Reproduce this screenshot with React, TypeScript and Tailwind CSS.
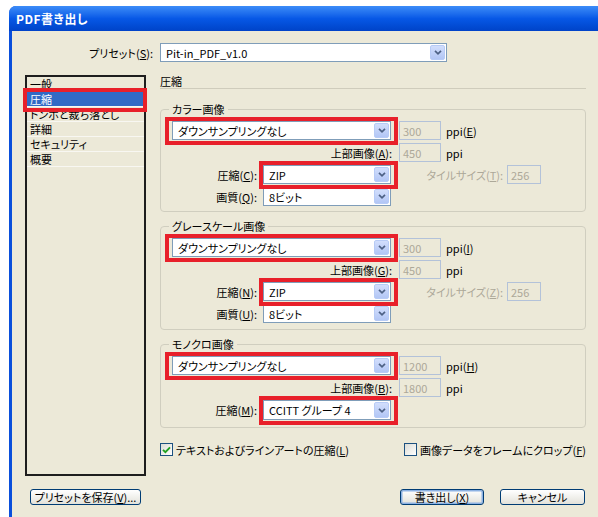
import React from "react";

const Chevron = () => (
  <svg width="8" height="5" viewBox="0 0 8 5">
    <path d="M1 0.8 L4 3.8 L7 0.8" fill="none" stroke="#4D6185" strokeWidth="1.7" />
  </svg>
);

function Select({ value, className }: { value: string; className: string }) {
  return (
    <div className={`flex h-[19px] border border-[#7F9DB9] bg-white ${className}`}>
      <div className="flex-1 pl-[5px] flex items-center whitespace-nowrap overflow-hidden">{value}</div>
      <div className="w-[15px] m-px rounded-[2px] border border-[#B7CBF6] bg-linear-to-b from-[#D2DEFC] to-[#B2C6F5] flex items-center justify-center">
        <Chevron />
      </div>
    </div>
  );
}

function Disabled({ value, className }: { value: string; className: string }) {
  return (
    <div className={`h-[19px] border border-[#B3C2D9] text-[#ACA899] pl-[3px] flex items-center ${className}`}>
      {value}
    </div>
  );
}

function Red({ children, wide }: { children: React.ReactNode; wide?: boolean }) {
  return (
    <div className="relative">
      {children}
      <div
        className={`absolute pointer-events-none border-[4px] border-[#E8202A] -top-[4px] -bottom-[5px] -right-[7px] ${
          wide ? "-left-[7px]" : "-left-[4px]"
        }`}
      />
    </div>
  );
}

function Mn({ c }: { c: string }) {
  return (
    <>
      (<span className="underline">{c}</span>)
    </>
  );
}

function Check({ checked }: { checked?: boolean }) {
  return (
    <span className="w-[13px] h-[13px] border border-[#1C5180] bg-linear-to-br from-[#DCDCD5] to-white flex items-center justify-center shrink-0">
      {checked && (
        <svg width="9" height="8" viewBox="0 0 9 8">
          <path d="M1 3.8 L3.4 6.2 L8 1.4" fill="none" stroke="#21A121" strokeWidth="1.9" />
        </svg>
      )}
    </span>
  );
}

function Group({
  title,
  children,
  extra,
}: {
  title: string;
  children: React.ReactNode;
  extra: string;
}) {
  return (
    <fieldset className={`border border-[#D0CEBF] rounded-[4px] ${extra}`}>
      <legend className="ml-[8px] px-[3px] leading-[14px]">{title}</legend>
      <div className="pt-[5px] pl-[11px] flex flex-col gap-[3px]">{children}</div>
    </fieldset>
  );
}

export default function App() {
  const listItems = ["一般", "圧縮", "トンボと裁ち落とし", "詳細", "セキュリティ", "概要"];
  return (
    <div className="w-[598px] h-[517px] bg-white overflow-hidden font-['Noto_Sans_CJK_JP',sans-serif] text-[11px] leading-[14px] text-black [font-feature-settings:'palt']">
      <div className="ml-[9px] mt-[6px] h-[511px] rounded-tl-[7px] overflow-hidden flex flex-col bg-[#0A4FDB]">
        {/* title bar */}
        <div className="h-[25px] shrink-0 bg-linear-to-b from-[#3C8CF8] via-[#0758E6] to-[#0043C8] flex items-center pl-[7px]">
          <span className="text-white font-bold text-[12px] tracking-[0.5px]">PDF書き出し</span>
        </div>
        {/* body */}
        <div className="flex-1 ml-[3px] bg-[#ECE9D8] flex flex-col">
          {/* preset row */}
          <div className="mt-[12px] h-[19px] flex items-center">
            <span className="w-[141px] text-right">
              プリセット<Mn c="S" />:
            </span>
            <Select value="Pit-in_PDF_v1.0" className="ml-[7px] w-[287px]" />
          </div>

          {/* main row */}
          <div className="mt-[13px] flex">
            <div className="ml-[13px] w-[121px] h-[401px] border-2 border-[#1E1E1E] flex flex-col">
              {listItems.map((it, i) => (
                <div key={it} className={`h-[15px] border-b ${i === 0 ? "border-transparent" : "border-[#F8F7F2]"}`}>
                  {i === 1 ? (
                    <div className="relative h-[14px]">
                      <div className="h-[14px] bg-[#316AC5] text-white pl-[3px] flex items-center">{it}</div>
                      <div className="absolute pointer-events-none border-[4px] border-[#E8202A] -top-[4px] -bottom-[6px] -left-[4px] -right-[3px]" />
                    </div>
                  ) : (
                    <div className="h-[14px] pl-[3px] flex items-center whitespace-nowrap">{it}</div>
                  )}
                </div>
              ))}
            </div>

            <div className="ml-[14px] w-[426px] flex flex-col">
              <div className="h-[14px] border-b border-[#CFCCBC] leading-[12px]">圧縮</div>

              <Group title="カラー画像" extra="mt-[13px] pb-[5px]">
                <div className="flex items-center h-[19px]">
                  <Red wide>
                    <Select value="ダウンサンプリングなし" className="w-[219px]" />
                  </Red>
                  <Disabled value="300" className="ml-[8px] w-[42px]" />
                  <span className="ml-[5px]">
                    ppi<Mn c="E" />
                  </span>
                </div>
                <div className="flex items-center h-[19px]">
                  <span className="w-[227px] text-right pr-[7px]">
                    上部画像<Mn c="A" />:
                  </span>
                  <Disabled value="450" className="w-[42px]" />
                  <span className="ml-[5px]">ppi</span>
                </div>
                <div className="flex items-center h-[19px]">
                  <span className="w-[91px] text-right pr-[6px]">
                    圧縮<Mn c="C" />:
                  </span>
                  <Red>
                    <Select value="ZIP" className="w-[128px]" />
                  </Red>
                  <span className="w-[116px] text-right pr-[4px] text-[#ACA899]">
                    タイルサイズ<Mn c="T" />:
                  </span>
                  <Disabled value="256" className="w-[34px]" />
                </div>
                <div className="flex items-center h-[19px]">
                  <span className="w-[91px] text-right pr-[6px]">
                    画質<Mn c="Q" />:
                  </span>
                  <Select value="8ビット" className="w-[128px] h-[18px]" />
                </div>
              </Group>

              <Group title="グレースケール画像" extra="mt-[7px] pb-[6px]">
                <div className="flex items-center h-[19px]">
                  <Red wide>
                    <Select value="ダウンサンプリングなし" className="w-[219px]" />
                  </Red>
                  <Disabled value="300" className="ml-[8px] w-[42px]" />
                  <span className="ml-[5px]">
                    ppi<Mn c="I" />
                  </span>
                </div>
                <div className="flex items-center h-[19px]">
                  <span className="w-[227px] text-right pr-[7px]">
                    上部画像<Mn c="G" />:
                  </span>
                  <Disabled value="450" className="w-[42px]" />
                  <span className="ml-[5px]">ppi</span>
                </div>
                <div className="flex items-center h-[19px]">
                  <span className="w-[91px] text-right pr-[6px]">
                    圧縮<Mn c="N" />:
                  </span>
                  <Red>
                    <Select value="ZIP" className="w-[128px]" />
                  </Red>
                  <span className="w-[116px] text-right pr-[4px] text-[#ACA899]">
                    タイルサイズ<Mn c="Z" />:
                  </span>
                  <Disabled value="256" className="w-[34px]" />
                </div>
                <div className="flex items-center h-[19px]">
                  <span className="w-[91px] text-right pr-[6px]">
                    画質<Mn c="U" />:
                  </span>
                  <Select value="8ビット" className="w-[128px] h-[18px]" />
                </div>
              </Group>

              <Group title="モノクロ画像" extra="mt-[7px] pb-[7px]">
                <div className="flex items-center h-[19px]">
                  <Red wide>
                    <Select value="ダウンサンプリングなし" className="w-[219px]" />
                  </Red>
                  <Disabled value="1200" className="ml-[8px] w-[42px]" />
                  <span className="ml-[5px]">
                    ppi<Mn c="H" />
                  </span>
                </div>
                <div className="flex items-center h-[19px]">
                  <span className="w-[227px] text-right pr-[7px]">
                    上部画像<Mn c="B" />:
                  </span>
                  <Disabled value="1800" className="w-[42px]" />
                  <span className="ml-[5px]">ppi</span>
                </div>
                <div className="flex items-center h-[20px]">
                  <span className="w-[91px] text-right pr-[6px]">
                    圧縮<Mn c="M" />:
                  </span>
                  <Red>
                    <Select value="CCITT グループ 4" className="w-[128px] h-[20px]" />
                  </Red>
                </div>
              </Group>

              <div className="mt-[15px] h-[13px] flex items-center">
                <Check checked />
                <span className="ml-[3px] w-[228px] whitespace-nowrap">
                  テキストおよびラインアートの圧縮<Mn c="L" />
                </span>
                <Check />
                <span className="ml-[3px] whitespace-nowrap">
                  画像データをフレームにクロップ<Mn c="F" />
                </span>
              </div>
            </div>
          </div>

          {/* bottom buttons */}
          <div className="mt-[13px] h-[16px] flex">
            <button className="ml-[18px] w-[111px] h-[16px] rounded-[3px] border border-[#003C74] bg-linear-to-b from-white to-[#E3E2DA] leading-[12px] text-[11px]">
              プリセットを保存<Mn c="V" />...
            </button>
            <button className="ml-[259px] w-[84px] h-[16px] rounded-[3px] border border-[#003C74] bg-linear-to-b from-white to-[#E3E2DA] shadow-[inset_0_0_0_1.5px_#8DB2E3] leading-[12px] text-[11px]">
              書き出し<Mn c="X" />
            </button>
            <button className="ml-[16px] w-[85px] h-[16px] rounded-[3px] border border-[#003C74] bg-linear-to-b from-white to-[#E3E2DA] leading-[12px] text-[11px]">
              キャンセル
            </button>
          </div>
        </div>
      </div>
    </div>
  );
}
